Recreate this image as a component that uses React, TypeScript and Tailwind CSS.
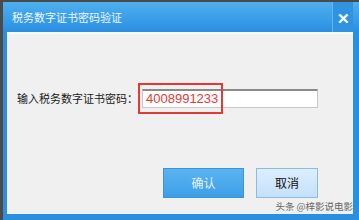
export default function App() {
  const font = { fontFamily: '"Noto Sans CJK SC", "Liberation Sans", sans-serif' };
  return (
    <div className="w-[359px] h-[220px] bg-[#4a4a4a] pt-[2px] pl-[3px] overflow-hidden" style={font}>
      <div className="w-[356px] h-[218px] flex flex-col bg-[#2b8fe0]">
        <div className="h-[30px] flex items-stretch bg-gradient-to-b from-[#4db0ee] to-[#2a8fe2]">
          <div className="flex-1 flex items-center pl-[9px] text-[11px] text-[#eef6ff]">税务数字证书密码验证</div>
          <div className="w-[21px] flex items-center justify-center border-l border-[#62b6ee] bg-[#2f93e2] text-white text-[15px] font-bold leading-none mr-[6px]">✕</div>
        </div>
        <div className="flex-1 mx-[4px] mb-[6px] mr-[6px] bg-[#f0f0f0] border-t-[2px] border-[#f8fbfd] flex flex-col">
          <div className="flex items-center mt-[53px] h-[22px]">
            <span className="ml-[10px] text-[11px] text-[#1a1a1a]">输入税务数字证书密码：</span>
            <div className="relative ml-[4px] w-[176px] h-[19px] bg-white border border-[#c8c8c8] border-t-[2px] border-t-[#8a8a8a] flex items-center">
              <span className="pl-[3px] text-[13px] leading-none text-[#e23a3a]" style={{ fontFamily: '"Liberation Sans", sans-serif' }}>4008991233</span>
              <div className="absolute left-[-5px] top-[-8px] w-[85px] h-[31px] border-[2px] border-[#e53935]"></div>
            </div>
          </div>
          <div className="flex mt-[59px] ml-[156px] gap-[12px]">
            <div className="w-[81px] h-[30px] flex items-center justify-center text-[12px] text-[#e6f3ff] bg-gradient-to-b from-[#5ab4f0] to-[#3d9ee8] border border-[#3a94dc]">确认</div>
            <div className="w-[62px] h-[30px] flex items-center justify-center text-[12px] text-[#111] bg-gradient-to-b from-[#dcefff] to-[#c4e0fa] border border-[#8cbbe6]">取消</div>
          </div>
          <div className="flex justify-end mt-[4px] pr-[0px] text-[9.5px] text-[#666] leading-none">头条 @梓影说电影</div>
        </div>
      </div>
    </div>
  );
}
